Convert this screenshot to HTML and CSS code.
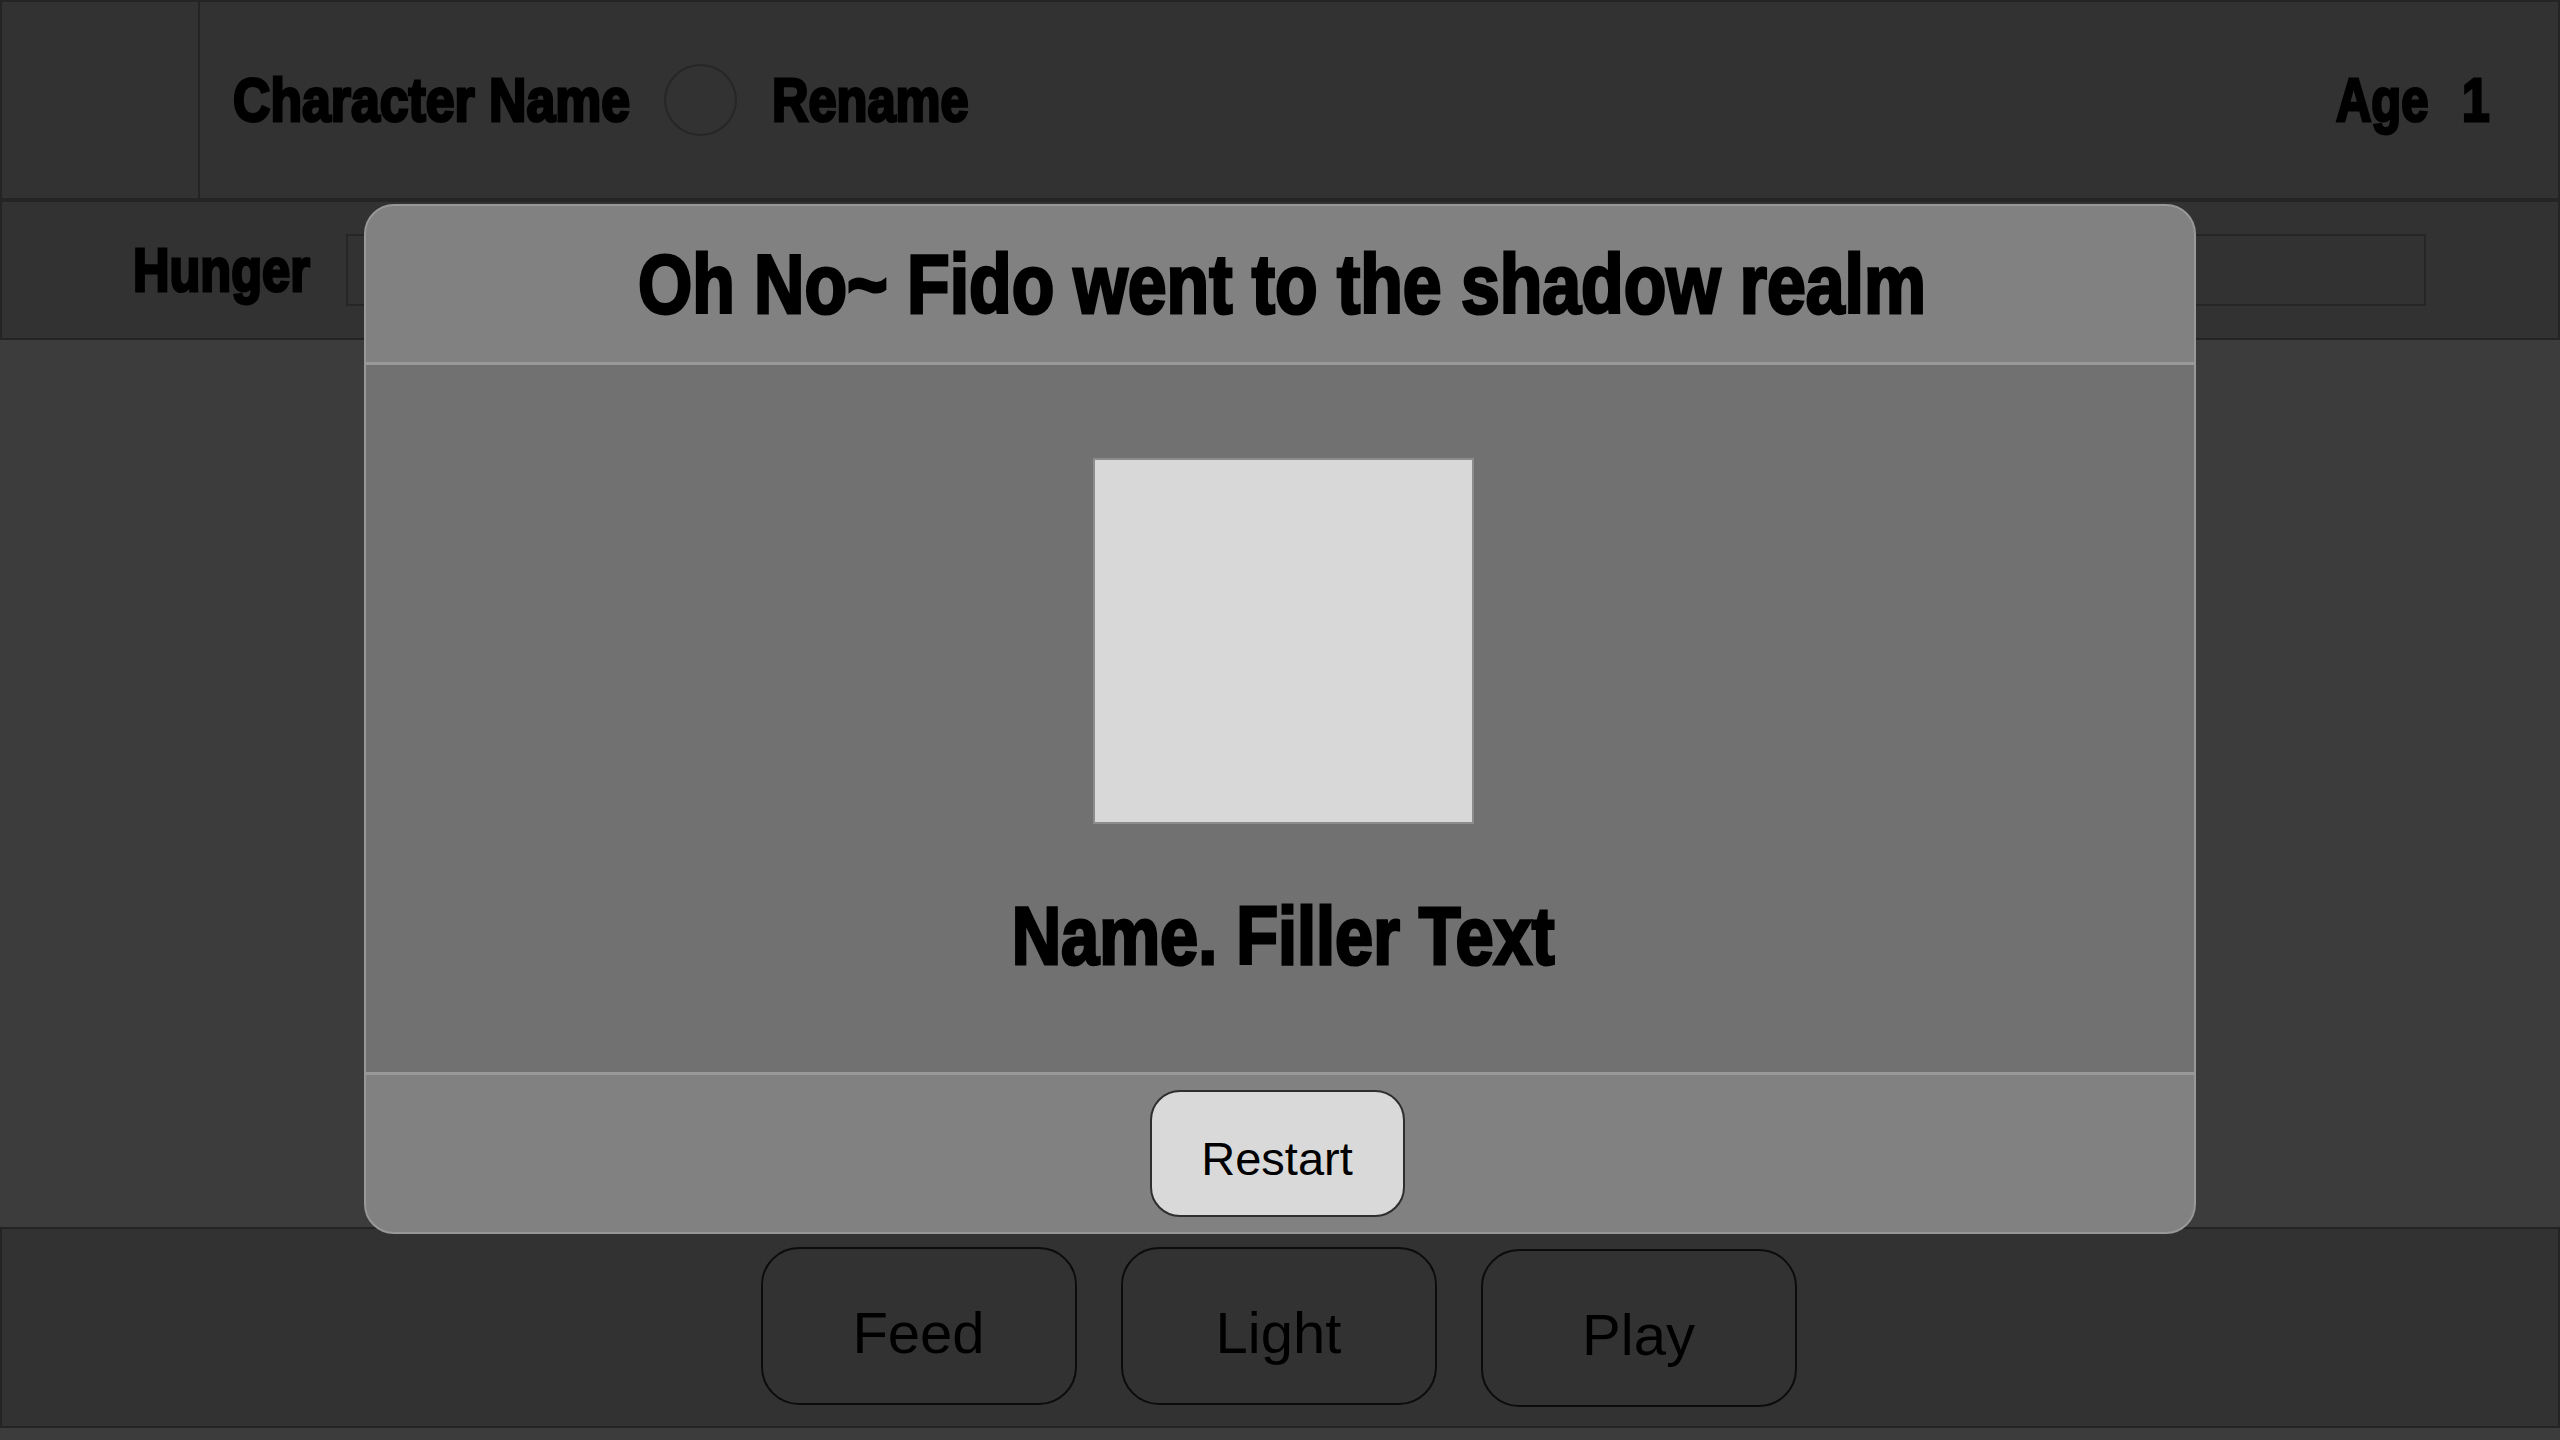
FILE: index.html
```html
<!DOCTYPE html>
<html lang="en">
<head>
<meta charset="utf-8">
<title>Pet</title>
<link rel="stylesheet" href="styles.css">
</head>
<body>
<div class="app">
  <header class="topbar">
    <div class="avatar-cell"></div>
    <div class="name-area">
      <span class="label char-name">Character Name</span>
      <span class="circle"></span>
      <span class="label rename">Rename</span>
      <span class="label age">Age</span>
      <span class="label age-num">1</span>
    </div>
  </header>
  <section class="stat-row">
    <span class="label hunger">Hunger</span>
    <div class="bar"></div>
  </section>
  <main class="stage"></main>
  <footer class="actions">
    <button class="action">Feed</button>
    <button class="action">Light</button>
    <button class="action play">Play</button>
  </footer>
  <div class="bottom-gap"></div>

  <div class="modal">
    <div class="modal-header">
      <h1 class="modal-title">Oh No~ Fido went to the shadow realm</h1>
    </div>
    <div class="modal-body">
      <div class="pet-img"></div>
      <p class="pet-text">Name. Filler Text</p>
    </div>
    <div class="modal-footer">
      <button class="restart">Restart</button>
    </div>
  </div>
</div>
</body>
</html>
```
FILE: styles.css
```css
* { box-sizing: border-box; }
html, body { margin: 0; padding: 0; }
body {
  width: 2560px;
  height: 1440px;
  background: #3c3c3c;
  font-family: "Liberation Sans", Arial, sans-serif;
  overflow: hidden;
}
.app {
  position: relative;
  display: flex;
  flex-direction: column;
  height: 1440px;
}
/* heavy condensed display text */
.label,
.modal-title,
.pet-text {
  display: inline-block;
  font-family: "Liberation Sans", Arial, sans-serif;
  font-weight: 700;
  line-height: 1;
  color: #000;
  -webkit-text-stroke: 3px #000;
  white-space: nowrap;
}
.label {
  font-size: 62px;
  transform-origin: left center;
}
.topbar {
  height: 200px;
  display: flex;
  background: #323232;
  border: 2px solid #242424;
}
.avatar-cell {
  width: 198px;
  border-right: 2px solid #242424;
}
.name-area {
  flex: 1;
  display: flex;
  align-items: center;
  padding-left: 33px;
  padding-right: 62px;
}
.char-name {
  transform: scaleX(0.835);
  margin-right: -45px;
}
.circle {
  flex: none;
  width: 73px;
  height: 72px;
  border: 2px solid #262626;
  border-radius: 50%;
}
.rename {
  margin-left: 35px;
  transform: scaleX(0.815);
}
.age {
  margin-left: auto;
  transform: scaleX(0.79);
}
.age-num {
  margin-left: 8px;
  transform: scaleX(0.8);
}
.stat-row {
  height: 140px;
  display: flex;
  align-items: center;
  padding: 0 132px 0 131px;
  background: #323232;
  border: 2px solid #242424;
}
.hunger {
  transform: scaleX(0.815);
  margin-right: -4px;
}
.bar {
  flex: 1;
  height: 72px;
  border: 2px solid #262626;
}
.stage { flex: 1; }
.actions {
  height: 201px;
  display: flex;
  justify-content: center;
  align-items: flex-start;
  gap: 44px;
  padding-top: 18px;
  padding-right: 3px;
  background: #323232;
  border: 2px solid #242424;
}
.action {
  width: 316px;
  height: 158px;
  background: transparent;
  border: 2px solid #0c0c0c;
  border-radius: 38px;
  font-family: "Liberation Sans", Arial, sans-serif;
  font-size: 58px;
  color: #000;
  padding: 12px 0 0;
}
.play { margin-top: 2px; }
.bottom-gap { height: 12px; }

.modal {
  position: absolute;
  left: 364px;
  top: 204px;
  width: 1832px;
  height: 1030px;
  display: flex;
  flex-direction: column;
  border: 2px solid #989898;
  border-radius: 30px;
  overflow: hidden;
  background: #818181;
}
.modal-header {
  height: 159px;
  display: flex;
  align-items: center;
  justify-content: center;
  border-bottom: 3px solid #999;
  padding-left: 4px;
}
.modal-title {
  margin: 0;
  font-size: 84px;
  transform: scaleX(0.83);
}
.modal-body {
  flex: 1;
  background: #717171;
  display: flex;
  flex-direction: column;
  align-items: center;
  padding-top: 93px;
  padding-left: 6px;
}
.pet-img {
  width: 381px;
  height: 366px;
  background: #d8d8d8;
  border: 2px solid #8c8c8c;
}
.pet-text {
  margin: 71px 0 0;
  font-size: 82px;
  transform: scaleX(0.835);
}
.modal-footer {
  height: 160px;
  border-top: 3px solid #999;
  display: flex;
  align-items: center;
  justify-content: center;
  padding-right: 6px;
}
.restart {
  width: 255px;
  height: 127px;
  background: #d9d9d9;
  border: 2px solid #2e2e2e;
  border-radius: 30px;
  font-family: "Liberation Sans", Arial, sans-serif;
  font-size: 47px;
  color: #000;
  padding: 9px 0 0;
}
```
